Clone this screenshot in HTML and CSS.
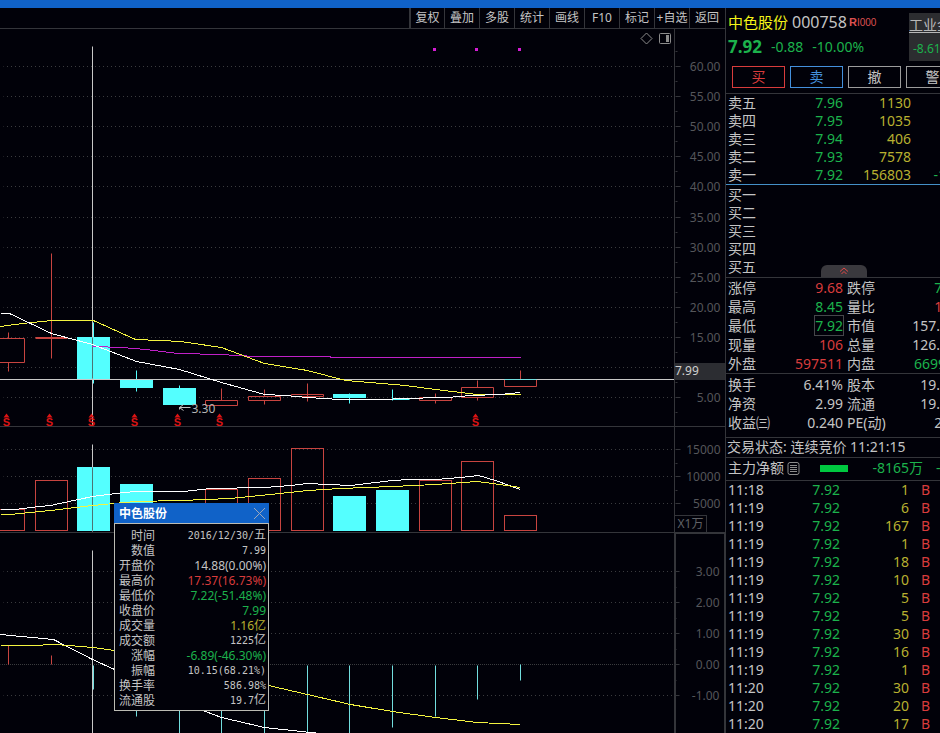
FILE: index.html
```html
<!DOCTYPE html>
<html lang="zh-CN">
<head>
    <meta charset="UTF-8">
    <meta name="viewport" content="width=device-width, initial-scale=1.0">
    <title>中色股份 000758</title>
    <link rel="stylesheet" href="styles.css">
</head>
<body>
    <div class="titlebar"></div>
    <main class="layout">
        <section class="charts">
            <nav class="toolbar">
                <button>复权</button>
                <button>叠加</button>
                <button>多股</button>
                <button>统计</button>
                <button>画线</button>
                <button>F10</button>
                <button>标记</button>
                <button>+自选</button>
                <button>返回</button>
            </nav>

            <!-- K line -->
            <div class="pane pane-price">
                <svg class="plot">
                    <g transform="translate(0.5,-28.5)">
                        <g class="grid">
                            <line x1="3" x2="100%" y1="66" y2="66"/>
                            <line x1="3" x2="100%" y1="96" y2="96"/>
                            <line x1="3" x2="100%" y1="126" y2="126"/>
                            <line x1="3" x2="100%" y1="156" y2="156"/>
                            <line x1="3" x2="100%" y1="186" y2="186"/>
                            <line x1="3" x2="100%" y1="217" y2="217"/>
                            <line x1="3" x2="100%" y1="247" y2="247"/>
                            <line x1="3" x2="100%" y1="277" y2="277"/>
                            <line x1="3" x2="100%" y1="307" y2="307"/>
                            <line x1="3" x2="100%" y1="337" y2="337"/>
                            <line x1="3" x2="100%" y1="367" y2="367"/>
                            <line x1="3" x2="100%" y1="397" y2="397"/>
                        </g>
                        <g class="signal">
                            <rect x="432.5" y="47.5" width="3" height="3"/>
                            <rect x="474.5" y="47.5" width="3" height="3"/>
                            <rect x="517.5" y="47.5" width="3" height="3"/>
                        </g>
                        <g class="up">
                            <path d="M8 332V338M8 362V371M-8 338H24V362H-8Z"/>
                            <path d="M51 253V358M35 337H67M35 338H67"/>
                            <path d="M221 388V400M205 400H237V405H205Z"/>
                            <path d="M264 389V396M264 400V404M248 396H280V400H248Z"/>
                            <path d="M307 383V401M291 394H323V396H291Z"/>
                            <path d="M435 393V397M435 400V403M419 397H451V400H419Z"/>
                            <path d="M477 380V387M477 397V400M461 387H493V397H461Z"/>
                            <path d="M520 370V379M504 379V386H536V379"/>
                        </g>
                        <g class="down">
                            <rect x="76.5" y="336.5" width="33" height="42"/>
                            <rect x="119.5" y="379.5" width="33" height="8"/>
                            <rect x="162.5" y="387.5" width="33" height="17"/>
                            <rect x="332.5" y="393.5" width="33" height="4"/>
                            <path d="M93 322V383M136 370V391M179 385V404M349 393V403M392 389V400M376 399H409"/>
                        </g>
                        <line class="cross" x1="-1" x2="100%" y1="379" y2="379"/>
                        <line class="cross" x1="92" x2="92" y1="46" y2="426"/>
                        <line class="cross-dark" x1="92" x2="92" y1="337" y2="378"/>
                        <line class="hist" x1="504" x2="536" y1="379" y2="379"/>
                        <polyline class="ma-m" points="92,346 122,347 145,349 178,353 220,354 255,356 328,356 332,357 520,357"/>
                        <polyline class="ma-y" points="0,326 22,323 51,320 93,320 135,339 160,340 180,341 221,347 264,363 307,370 345,380 405,385 435,389 477,394 520,394"/>
                        <polyline class="ma-w" points="0,313 9,313 51,333 92,344 136,361 179,369 221,382 264,394 285,395 307,397 340,399 375,399 410,398 435,397 447,397 470,395 500,394 520,392"/>
                        <path class="mark" d="M190 407H179V409M183 404L179 407L183 410"/>
                        <text class="low" x="191" y="412">3.30</text>
                        <g class="xr">
                            <text x="6" y="425">S</text><path d="M3 417L6 413L9 417Z"/>
                            <text x="49" y="425">S</text><path d="M46 417L49 413L52 417Z"/>
                            <text x="91" y="425">S</text><path d="M88 417L91 413L94 417Z"/>
                            <text x="134" y="425">S</text><path d="M131 417L134 413L137 417Z"/>
                            <text x="177" y="425">S</text><path d="M174 417L177 413L180 417Z"/>
                            <text x="219" y="425">S</text><path d="M216 417L219 413L222 417Z"/>
                            <text x="475" y="425">S</text><path d="M472 417L475 413L478 417Z"/>
                        </g>
                    </g>
                </svg>
                <svg class="axis">
                    <g transform="translate(-673.5,-28.5)">
                        <path class="ticks" d="M674 66H679M674 96H679M674 126H679M674 156H679M674 186H679M674 217H679M674 247H679M674 277H679M674 307H679M674 337H679M674 367H679M674 397H679"/>
                        <path class="ticks" d="M674 51H676M674 81H676M674 111H676M674 141H676M674 171H676M674 201H676M674 232H676M674 262H676M674 292H676M674 322H676M674 352H676M674 382H676M674 412H676"/>
                        <text x="719" y="70">60.00</text>
                        <text x="719" y="100">55.00</text>
                        <text x="719" y="130">50.00</text>
                        <text x="719" y="160">45.00</text>
                        <text x="719" y="190">40.00</text>
                        <text x="719" y="221">35.00</text>
                        <text x="719" y="251">30.00</text>
                        <text x="719" y="281">25.00</text>
                        <text x="719" y="311">20.00</text>
                        <text x="719" y="341">15.00</text>
                        <text x="719" y="401">5.00</text>
                    </g>
                </svg>
                <div class="price-tag">7.99</div>
                <div class="pane-tools">
                    <button aria-label="指标">
                        <svg width="13" height="13"><path d="M6.5 1L12 6.5L6.5 12L1 6.5Z"/></svg>
                    </button>
                    <button aria-label="侧栏">
                        <svg width="13" height="13"><rect x="0.5" y="1.5" width="11" height="10" rx="1"/><rect class="fill" x="7" y="3" width="3" height="7"/></svg>
                    </button>
                </div>
            </div>

            <!-- volume -->
            <div class="pane pane-vol">
                <svg class="plot">
                    <g transform="translate(0.5,-426.5)">
                        <g class="grid">
                            <line x1="3" x2="100%" y1="449" y2="449"/>
                            <line x1="3" x2="100%" y1="476" y2="476"/>
                            <line x1="3" x2="100%" y1="503" y2="503"/>
                        </g>
                        <g class="up">
                            <rect x="-8" y="509" width="32" height="21"/>
                            <rect x="35" y="480" width="32" height="50"/>
                            <rect x="205" y="489" width="32" height="41"/>
                            <rect x="248" y="478" width="32" height="52"/>
                            <rect x="291" y="448" width="32" height="82"/>
                            <rect x="419" y="480" width="32" height="50"/>
                            <rect x="461" y="461" width="32" height="69"/>
                            <rect x="504" y="515" width="32" height="15"/>
                        </g>
                        <g class="down">
                            <rect x="76.5" y="466.5" width="33" height="64"/>
                            <rect x="119.5" y="483.5" width="33" height="47"/>
                            <rect x="332.5" y="495.5" width="33" height="35"/>
                            <rect x="375.5" y="489.5" width="33" height="41"/>
                        </g>
                        <line class="cross" x1="92" x2="92" y1="444" y2="531"/>
                        <line class="cross-dark" x1="92" x2="92" y1="467" y2="530"/>
                        <polyline class="ma-w" points="0,509 15,509 30,507 50,505 92,496 115,493 135,491 183,491 210,488 264,487 290,485 307,483 350,485 392,480 410,479 435,479 460,477 478,475 495,480 520,489"/>
                        <polyline class="ma-y" points="0,514 10,514 50,510 92,505 135,501 180,500 230,498 270,494 307,490 340,488 392,486 435,484 477,481 492,483 520,487"/>
                    </g>
                </svg>
                <svg class="axis">
                    <g transform="translate(-673.5,-426.5)">
                        <path class="ticks" d="M674 449H679M674 476H679M674 503H679M674 463H676M674 490H676"/>
                        <text x="719" y="453">15000</text>
                        <text x="719" y="480">10000</text>
                        <text x="719" y="507">5000</text>
                    </g>
                </svg>
                <div class="unit">X1万</div>
            </div>

            <!-- MACD -->
            <div class="pane pane-macd">
                <svg class="plot">
                    <g transform="translate(0.5,-532.5)">
                        <g class="grid">
                            <line x1="3" x2="100%" y1="571" y2="571"/>
                            <line x1="3" x2="100%" y1="602" y2="602"/>
                            <line x1="3" x2="100%" y1="633" y2="633"/>
                            <line class="zero" x1="0" x2="100%" y1="664" y2="664"/>
                            <line x1="3" x2="100%" y1="695" y2="695"/>
                        </g>
                        <path class="up" d="M8 645V664M51 655V664"/>
                        <path class="hist" d="M93 665V689M136 665V716M179 665V733M221 665V733M264 665V733M307 665V733M349 665V733M392 665V727M435 665V716M477 665V699M520 664V680"/>
                        <line class="cross" x1="92" x2="92" y1="550" y2="733"/>
                        <polyline class="ma-w" points="0,634 53,639 92,659 114,669 205,711 221,717 264,727 310,732 330,734"/>
                        <polyline class="ma-y" points="0,645 30,645 55,644 93,647 114,650 268,685 307,694 350,704 392,711 435,717 477,722 520,724"/>
                    </g>
                </svg>
                <svg class="axis">
                    <g transform="translate(-675.5,-533.5)">
                        <path class="ticks" d="M674 571H679M674 602H679M674 633H679M674 664H679M674 695H679M674 587H676M674 618H676M674 649H676M674 680H676"/>
                        <text x="719" y="575">3.00</text>
                        <text x="719" y="606">2.00</text>
                        <text x="719" y="637">1.00</text>
                        <text x="719" y="668">0.00</text>
                        <text x="719" y="699">-1.00</text>
                    </g>
                </svg>
            </div>

            <div class="popup">
                <div class="popup-head">
                    <span>中色股份</span>
                    <button aria-label="关闭">
                        <svg width="13" height="13"><path d="M1 1L12 12M12 1L1 12"/></svg>
                    </button>
                </div>
                <table class="popup-body">
                    <tr><th>时间</th><td class="mono">2016/12/30/<span>五</span></td></tr>
                    <tr><th>数值</th><td class="mono">7.99</td></tr>
                    <tr><th>开盘价</th><td>14.88(0.00%)</td></tr>
                    <tr><th>最高价</th><td class="red">17.37(16.73%)</td></tr>
                    <tr><th>最低价</th><td class="green">7.22(-51.48%)</td></tr>
                    <tr><th>收盘价</th><td class="green">7.99</td></tr>
                    <tr><th>成交量</th><td class="yellow">1.16亿</td></tr>
                    <tr><th>成交额</th><td class="mono">1225<span>亿</span></td></tr>
                    <tr><th>涨幅</th><td class="green">-6.89(-46.30%)</td></tr>
                    <tr><th>振幅</th><td class="mono">10.15(68.21%)</td></tr>
                    <tr><th>换手率</th><td class="mono">586.98%</td></tr>
                    <tr><th>流通股</th><td class="mono">19.7<span>亿</span></td></tr>
                </table>
            </div>
        </section>

        <aside class="quote">
            <header class="quote-head">
                <div>
                    <div class="stock">
                        <h1>中色股份</h1>
                        <span class="code">000758</span>
                        <span class="tag"><b>R</b>I000</span>
                    </div>
                    <div class="price green">
                        <strong>7.92</strong>
                        <span>-0.88</span>
                        <span>-10.00%</span>
                    </div>
                </div>
                <div class="industry">
                    <a href="#">工业金属</a>
                    <span class="green">-8.61%</span>
                </div>
            </header>
            <div class="trade">
                <button class="buy">买</button>
                <button class="sell">卖</button>
                <button>撤</button>
                <button>警</button>
            </div>

            <table class="book asks">
                <tr><th>卖五</th><td class="green">7.96</td><td class="yellow">1130</td><td></td></tr>
                <tr><th>卖四</th><td class="green">7.95</td><td class="yellow">1035</td><td></td></tr>
                <tr><th>卖三</th><td class="green">7.94</td><td class="yellow">406</td><td></td></tr>
                <tr><th>卖二</th><td class="green">7.93</td><td class="yellow">7578</td><td></td></tr>
                <tr><th>卖一</th><td class="green">7.92</td><td class="yellow">156803</td><td class="green">-106</td></tr>
            </table>
            <div class="bids">
                <table class="book">
                    <tr><th>买一</th><td></td><td></td><td></td></tr>
                    <tr><th>买二</th><td></td><td></td><td></td></tr>
                    <tr><th>买三</th><td></td><td></td><td></td></tr>
                    <tr><th>买四</th><td></td><td></td><td></td></tr>
                    <tr><th>买五</th><td></td><td></td><td></td></tr>
                </table>
                <button class="expand" aria-label="展开">
                    <svg width="10" height="8"><path d="M1 4.5L5 1L9 4.5M2.5 7L5 4.5L7.5 7"/></svg>
                </button>
            </div>

            <table class="stats">
                <tr><th>涨停</th><td class="red">9.68</td><th>跌停</th><td class="green">7.92</td></tr>
                <tr><th>最高</th><td class="green">8.45</td><th>量比</th><td class="red">1.20</td></tr>
                <tr><th>最低</th><td class="green"><span class="boxed">7.92</span></td><th>市值</th><td>157.6亿</td></tr>
                <tr><th>现量</th><td class="red">106</td><th>总量</th><td>126.7万</td></tr>
                <tr><th>外盘</th><td class="red">597511</td><th>内盘</th><td class="green">669911</td></tr>
            </table>
            <table class="stats stats-more">
                <tr><th>换手</th><td>6.41%</td><th>股本</th><td>19.7亿</td></tr>
                <tr><th>净资</th><td>2.99</td><th>流通</th><td>19.7亿</td></tr>
                <tr><th>收益㈢</th><td>0.240</td><th>PE(动)</th><td>24.7</td></tr>
            </table>
            <div class="status">交易状态: 连续竞价 11:21:15</div>
            <div class="netflow">
                <span>主力净额</span>
                <svg width="13" height="13"><rect x="1" y="0.5" width="11" height="12" rx="2"/><path d="M3 3.5H10M3 5.5H10M3 7.5H10M3 9.5H10"/></svg>
                <i class="flow-bar"></i>
                <span class="flow-value green">-8165万</span>
                <span class="green">-8%</span>
            </div>

            <table class="deals">
                <tr><th>11:18</th><td class="green">7.92</td><td class="yellow">1</td><td class="red">B</td></tr>
                <tr><th>11:19</th><td class="green">7.92</td><td class="yellow">6</td><td class="red">B</td></tr>
                <tr><th>11:19</th><td class="green">7.92</td><td class="yellow">167</td><td class="red">B</td></tr>
                <tr><th>11:19</th><td class="green">7.92</td><td class="yellow">1</td><td class="red">B</td></tr>
                <tr><th>11:19</th><td class="green">7.92</td><td class="yellow">18</td><td class="red">B</td></tr>
                <tr><th>11:19</th><td class="green">7.92</td><td class="yellow">10</td><td class="red">B</td></tr>
                <tr><th>11:19</th><td class="green">7.92</td><td class="yellow">5</td><td class="red">B</td></tr>
                <tr><th>11:19</th><td class="green">7.92</td><td class="yellow">5</td><td class="red">B</td></tr>
                <tr><th>11:19</th><td class="green">7.92</td><td class="yellow">30</td><td class="red">B</td></tr>
                <tr><th>11:19</th><td class="green">7.92</td><td class="yellow">16</td><td class="red">B</td></tr>
                <tr><th>11:19</th><td class="green">7.92</td><td class="yellow">1</td><td class="red">B</td></tr>
                <tr><th>11:20</th><td class="green">7.92</td><td class="yellow">30</td><td class="red">B</td></tr>
                <tr><th>11:20</th><td class="green">7.92</td><td class="yellow">20</td><td class="red">B</td></tr>
                <tr><th>11:20</th><td class="green">7.92</td><td class="yellow">17</td><td class="red">B</td></tr>
            </table>
        </aside>
    </main>
</body>
</html>
```

FILE: styles.css
```css
* {
    box-sizing: border-box;
}
body {
    margin: 0;
    min-height: 100vh;
    display: flex;
    flex-direction: column;
    overflow: hidden;
    background-color: #010109;
    color: #c4c4c4;
    font-family: "Noto Sans", "Noto Sans CJK SC", sans-serif;
    font-size: 14px;
}
button {
    padding: 0;
    border: none;
    background: none;
    color: inherit;
    font-family: inherit;
    cursor: pointer;
}
svg {
    display: block;
    fill: none;
    stroke-width: 1;
}
table {
    border-collapse: collapse;
    table-layout: fixed;
}
th, td {
    padding: 0;
    white-space: nowrap;
}
th {
    font-weight: normal;
    text-align: left;
}
td {
    text-align: right;
}
.red {
    color: #d83c3c;
}
.green {
    color: #1cb24c;
}
.yellow {
    color: #b8b030;
}
.titlebar {
    height: 8px;
    background-color: #1062c8;
}
.layout {
    flex: 1;
    display: grid;
    grid-template-columns: minmax(0, 1fr) 215px;
}

/* charts */
.charts {
    position: relative;
    display: flex;
    flex-direction: column;
}
.toolbar {
    display: flex;
    justify-content: flex-end;
    height: 21px;
    padding-right: 1px;
    border-bottom: 1px solid #34353a;
}
.toolbar button {
    width: 35px;
    border-left: 1px solid #34353a;
    font-size: 12px;
    line-height: 18px;
    white-space: nowrap;
}
.toolbar button:first-child {
    border-left-width: 2px;
}
.pane {
    position: relative;
    display: grid;
    grid-template-columns: minmax(0, 1fr) 51px;
    border-bottom: 1px solid #34353a;
}
.pane-price {
    height: 398px;
}
.pane-vol {
    height: 106px;
}
.pane-macd {
    flex: 1;
    border-bottom: none;
}
.plot, .axis {
    width: 100%;
    height: 100%;
    overflow: hidden;
}
.axis {
    border-left: 1px solid #34353a;
}
.pane-macd .axis {
    border: 2px solid #34353a;
    border-width: 1px 1px 0 2px;
}
.axis text {
    fill: #55565a;
    font-size: 12px;
    text-anchor: end;
}
.ticks {
    stroke: #34353a;
}
.grid line {
    stroke: #3a3b3e;
    stroke-dasharray: 1 3;
    stroke-dashoffset: 0.5;
}
.grid .zero {
    stroke-dasharray: 1 1;
}
.signal {
    fill: #d41cd4;
}
.up {
    stroke: #c84440;
}
.down rect {
    fill: #54ffff;
}
.down path {
    stroke: #54ffff;
}
.hist {
    stroke: #72dede;
}
.cross {
    stroke: #c8c8c8;
}
.cross-dark {
    stroke: #4c7474;
}
.ma-w, .ma-y, .ma-m {
    shape-rendering: crispEdges;
}
.ma-w {
    stroke: #ffffff;
}
.ma-y {
    stroke: #f4f440;
}
.ma-m {
    stroke: #c020c8;
}
.mark {
    stroke: #c4c4c4;
}
.low {
    fill: #b4b4b4;
    font-size: 12px;
}
.xr {
    fill: #dc1414;
}
.xr text {
    font-family: "Liberation Sans", sans-serif;
    font-size: 11px;
    font-weight: bold;
    text-anchor: middle;
}
.price-tag {
    position: absolute;
    right: 0;
    top: 334px;
    width: 50px;
    height: 17px;
    background-color: #2c2d32;
    color: #d0d0d0;
    font-size: 12px;
    line-height: 15px;
}
.pane-tools {
    position: absolute;
    right: 53px;
    top: 3px;
    display: flex;
    gap: 6px;
}
.pane-tools svg {
    stroke: #8c8c8c;
}
.pane-tools .fill {
    fill: #8c8c8c;
    stroke: none;
}
.unit {
    position: absolute;
    right: 18px;
    bottom: 0;
    width: 33px;
    height: 17px;
    border: 1px solid #34353a;
    border-bottom: none;
    color: #606166;
    font-size: 12px;
    line-height: 15px;
    text-align: center;
}

/* candle details */
.popup {
    position: absolute;
    left: 114px;
    top: 495px;
    width: 155px;
    background-color: #010109;
}
.popup-head {
    display: flex;
    justify-content: space-between;
    align-items: center;
    height: 20px;
    padding: 0 3px 0 5px;
    background-color: #1062c8;
    color: #ffffff;
    font-size: 12px;
    font-weight: bold;
}
.popup-head svg {
    stroke: #a0a8b8;
}
.popup-body {
    width: 100%;
    border: 1px solid #bcbcb4;
    border-collapse: separate;
    border-spacing: 0;
    padding: 4px 2px 2px 0;
    font-size: 12px;
    line-height: 15px;
}
.popup-body th {
    width: 40px;
    text-align: right;
}
.popup-body tr {
    height: 15px;
}
.popup-body .mono {
    font-family: "DejaVu Sans Mono", monospace;
    font-size: 10px;
}
.popup-body .mono span {
    font-family: "Noto Sans CJK SC", sans-serif;
    font-size: 12px;
    line-height: 12px;
}

/* quote panel */
.quote {
    border-left: 1px solid #34353a;
    overflow: hidden;
}
.quote table {
    width: 236px;
    line-height: 18px;
}
.quote th {
    width: 50px;
    padding-left: 2px;
}
.quote-head {
    display: flex;
    justify-content: space-between;
    width: 239px;
    height: 58px;
    padding: 5px 0 5px 2px;
}
.stock, .price {
    display: flex;
    align-items: center;
    height: 18px;
    line-height: 18px;
}
.stock h1 {
    margin: 0 4px 0 0;
    color: #f4f418;
    font-size: 15px;
    font-weight: normal;
}
.code {
    margin-right: 2px;
    font-size: 16px;
}
.tag {
    color: #dc5050;
    font-family: "Liberation Sans Narrow", "Liberation Sans", sans-serif;
    font-size: 10px;
    line-height: 14px;
}
.tag b {
    font-family: "Liberation Sans", sans-serif;
    font-size: 11px;
}
.price {
    gap: 9px;
    margin-top: 7px;
}
.price strong {
    font-size: 17px;
}
.industry {
    width: 56px;
    height: 48px;
    background-color: #2c2d30;
    font-size: 12px;
    line-height: 24px;
}
.industry a {
    display: block;
    color: #b8b8b8;
    font-size: 14px;
    text-decoration: underline;
    text-underline-offset: 2px;
}
.industry span {
    padding-left: 4px;
}
.trade {
    display: flex;
    gap: 5px;
    height: 28px;
    padding-left: 6px;
    border-bottom: 1px solid #34353a;
}
.trade button {
    flex: 0 0 53px;
    height: 22px;
    border: 1px solid #9c9c9c;
    font-size: 14px;
    line-height: 20px;
}
.trade .buy {
    border-color: #d83c3c;
    color: #d83c3c;
}
.trade .sell {
    border-color: #4490dc;
    color: #4490dc;
}
.book td:nth-child(2) {
    width: 67px;
}
.book td:nth-child(3) {
    width: 68px;
}
.bids {
    position: relative;
    padding: 1px 0;
    border-top: 1px solid #4490c8;
    border-bottom: 1px solid #34353a;
}
.expand {
    position: absolute;
    left: 95px;
    bottom: 0;
    width: 46px;
    height: 12px;
    border-radius: 6px 6px 0 0;
    background-color: #3a393e;
}
.expand svg {
    margin: 0 auto;
    stroke: #e04848;
}
.stats tr {
    height: 19px;
}
.quote .stats {
    line-height: 19px;
}
.stats td:nth-child(2) {
    width: 67px;
}
.quote .stats th:nth-child(3) {
    width: 60px;
    padding-left: 4px;
}
.boxed {
    outline: 1px solid #45464a;
}
.stats {
    border-bottom: 1px solid #34353a;
}
.stats-more {
    border-collapse: separate;
    border-spacing: 0;
    padding: 1px 0 5px;
}
.status {
    height: 20px;
    padding-left: 1px;
    border-bottom: 1px solid #34353a;
    line-height: 18px;
    white-space: nowrap;
}
.netflow {
    display: flex;
    align-items: center;
    width: 239px;
    height: 23px;
    padding: 0 0 2px 2px;
    border-bottom: 1px solid #34353a;
    line-height: 20px;
}
.netflow svg {
    margin-left: 3px;
    stroke: #8c8c8c;
}
.flow-bar {
    width: 28px;
    height: 7px;
    margin-left: 20px;
    background-color: #00c840;
}
.flow-value {
    width: 75px;
    margin-right: 13px;
    text-align: right;
}
.quote .deals th {
    width: 60px;
}
.deals td:nth-child(2) {
    width: 54px;
}
.deals td:nth-child(3) {
    width: 69px;
}
.deals td:last-child {
    padding-left: 12px;
    text-align: left;
}
```
